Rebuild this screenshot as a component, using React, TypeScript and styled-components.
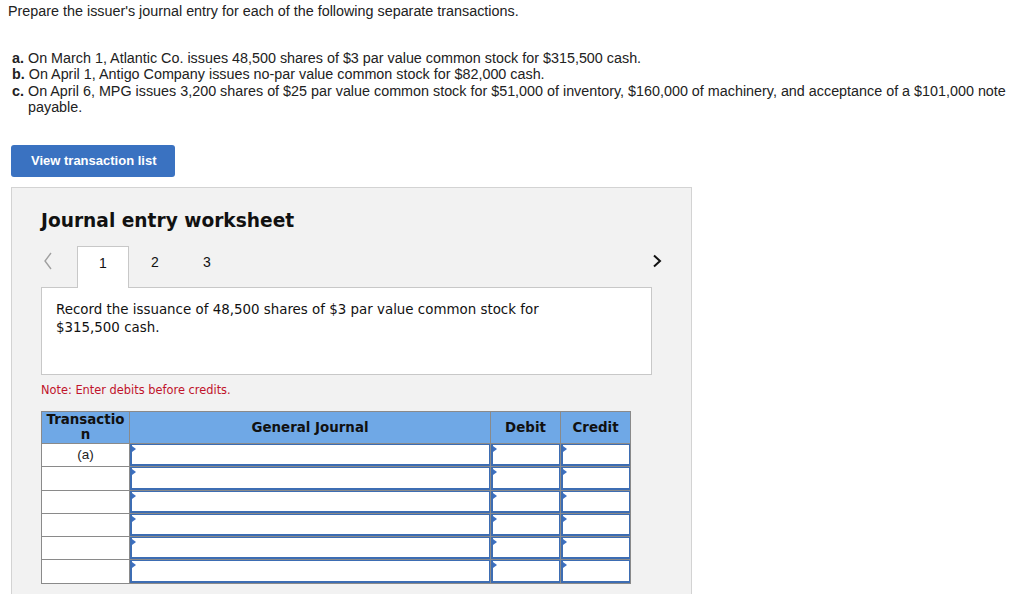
import React from 'react'
import styled, { createGlobalStyle } from 'styled-components'

const GlobalStyle = createGlobalStyle`
  body {
    margin: 0;
    background: #fff;
    font-family: "Liberation Sans", Arial, sans-serif;
    color: #222;
  }
`;

const transactions = [
  { key: 'a.', text: 'On March 1, Atlantic Co. issues 48,500 shares of $3 par value common stock for $315,500 cash.' },
  { key: 'b.', text: 'On April 1, Antigo Company issues no-par value common stock for $82,000 cash.' },
  {
    key: 'c.',
    text: 'On April 6, MPG issues 3,200 shares of $25 par value common stock for $51,000 of inventory, $160,000 of machinery, and acceptance of a $101,000 note payable.',
  },
];

const tabs = ['1', '2', '3'];
const rows = ['(a)', '', '', '', '', ''];

export default function App() {
  return (
    <>
      <GlobalStyle />
      <Page>
        <Intro>Prepare the issuer's journal entry for each of the following separate transactions.</Intro>
        <List>
          {transactions.map((t) => (
            <Item key={t.key}>
              <b>{t.key}</b> {t.text}
            </Item>
          ))}
        </List>
        <ListButton type="button">View transaction list</ListButton>
        <Panel>
          <Heading>Journal entry worksheet</Heading>
          <TabRow>
            <TabGroup>
              <Arrow $muted>
                <svg width="10" height="18" viewBox="0 0 10 18">
                  <path d="M8 1 L2 9 L8 17" fill="none" stroke="currentColor" strokeWidth="1.4" />
                </svg>
              </Arrow>
              {tabs.map((t, i) => (
                <Tab key={t} $active={i === 0}>{t}</Tab>
              ))}
            </TabGroup>
            <Arrow>
              <svg width="10" height="14" viewBox="0 0 10 14">
                <path d="M2 1.5 L8 7 L2 12.5" fill="none" stroke="currentColor" strokeWidth="2" />
              </svg>
            </Arrow>
          </TabRow>
          <EntryBox>
            Record the issuance of 48,500 shares of $3 par value common stock for
            <br />
            $315,500 cash.
          </EntryBox>
          <Note>Note: Enter debits before credits.</Note>
          <Table>
            <colgroup>
              <col style={{ width: 88 }} />
              <col style={{ width: 361 }} />
              <col style={{ width: 70 }} />
              <col style={{ width: 70 }} />
            </colgroup>
            <thead>
              <tr>
                <Th>Transaction</Th>
                <Th>General Journal</Th>
                <Th>Debit</Th>
                <Th>Credit</Th>
              </tr>
            </thead>
            <tbody>
              {rows.map((label, i) => (
                <tr key={i}>
                  <LabelCell>{label}</LabelCell>
                  {[0, 1, 2].map((c) => (
                    <InputCell key={c}>
                      <Field />
                    </InputCell>
                  ))}
                </tr>
              ))}
            </tbody>
          </Table>
        </Panel>
      </Page>
    </>
  );
}

const Page = styled.div`
  padding: 3px 0 0 0;
  font-size: 14.35px;
`;

const Intro = styled.p`
  margin: 0 0 30px 8px;
  line-height: 16.6px;
  color: #222;
`;

const List = styled.div`
  margin: 0 0 29px 12px;
  padding-right: 10px;
`;

const Item = styled.div`
  padding-left: 16px;
  text-indent: -16px;
  line-height: 16.6px;
  b {
    font-weight: bold;
  }
`;

const ListButton = styled.button`
  display: block;
  margin: 0 0 10px 11px;
  width: 164px;
  height: 32px;
  border: none;
  border-radius: 3px;
  background: #3a72c1;
  color: #fff;
  font-family: "Liberation Sans", Arial, sans-serif;
  font-weight: bold;
  font-size: 13px;
  text-align: left;
  padding: 0 0 0 20px;
`;

const Panel = styled.div`
  margin-left: 11px;
  border: 1px solid #d3d3d3;
  background: #f2f2f2;
  padding: 20px 39px 40px 29px;
  box-sizing: content-box;
  width: 611px;
`;

const Heading = styled.h2`
  margin: 0;
  font-family: "DejaVu Sans", Verdana, sans-serif;
  font-size: 18.6px;
  font-weight: bold;
  color: #111;
  line-height: 26px;
`;

const TabRow = styled.div`
  display: flex;
  justify-content: space-between;
  align-items: flex-end;
  margin-top: 12px;
  margin-right: -10px;
  height: 41px;
`;

const TabGroup = styled.div`
  display: flex;
  align-items: flex-end;
  height: 100%;
`;

const Arrow = styled.div<{ $muted?: boolean }>`
  width: ${(p) => (p.$muted ? '36px' : '63px')};
  height: 100%;
  display: flex;
  align-items: center;
  padding-left: ${(p) => (p.$muted ? '2px' : '0')};
  padding-bottom: ${(p) => (p.$muted ? '10px' : '11px')};
  box-sizing: border-box;
  justify-content: ${(p) => (p.$muted ? 'flex-start' : 'flex-end')};
  color: ${(p) => (p.$muted ? '#a0a0a0' : '#111')};
`;

const Tab = styled.div<{ $active?: boolean }>`
  width: 52px;
  height: 42px;
  margin-bottom: -1px;
  box-sizing: border-box;
  display: flex;
  align-items: center;
  justify-content: center;
  padding-bottom: 9px;
  font-family: "Liberation Sans", Arial, sans-serif;
  font-size: 14px;
  color: #111;
  position: relative;
  z-index: 1;
  background: ${(p) => (p.$active ? '#fff' : 'transparent')};
  border: ${(p) => (p.$active ? '1px solid #c8c8c8' : 'none')};
  border-bottom: none;
`;

const EntryBox = styled.div`
  height: 88px;
  box-sizing: border-box;
  border: 1px solid #c8c8c8;
  background: #fff;
  padding: 13px 14px;
  font-family: "DejaVu Sans", Verdana, sans-serif;
  font-size: 13.4px;
  line-height: 18px;
  color: #111;
`;

const Note = styled.div`
  margin: 8px 0 14px;
  font-family: "DejaVu Sans", Verdana, sans-serif;
  font-size: 11.4px;
  line-height: 14px;
  color: #c0132b;
`;

const Table = styled.table`
  border-collapse: collapse;
  table-layout: fixed;
  width: 589px;
  background: #fff;
`;

const Th = styled.th`
  height: 31px;
  padding: 0 2px;
  background: #6fa8e6;
  border: 1px solid #8a8a8a;
  font-family: "DejaVu Sans", Verdana, sans-serif;
  font-size: 13.4px;
  font-weight: bold;
  line-height: 15px;
  color: #111;
  word-break: break-all;
  text-align: center;
`;

const LabelCell = styled.td`
  height: 22.3px;
  padding: 0;
  border: 1px solid #8a8a8a;
  font-family: "Liberation Sans", Arial, sans-serif;
  font-size: 13.5px;
  text-align: center;
  vertical-align: top;
  line-height: 21px;
  color: #222;
`;

const InputCell = styled.td`
  height: 22.3px;
  padding: 0;
  border: 1px solid #8a8a8a;
`;

const Field = styled.div`
  position: relative;
  height: 100%;
  min-height: 22px;
  box-sizing: border-box;
  border: 1px solid #3d6db3;
  border-left-width: 2px;
  border-bottom-width: 2px;
  background: #fff;
  &::before {
    content: '';
    position: absolute;
    left: 0;
    top: 1px;
    border-style: solid;
    border-width: 3px 0 3px 4px;
    border-color: transparent transparent transparent #3d6fc0;
  }
`;
